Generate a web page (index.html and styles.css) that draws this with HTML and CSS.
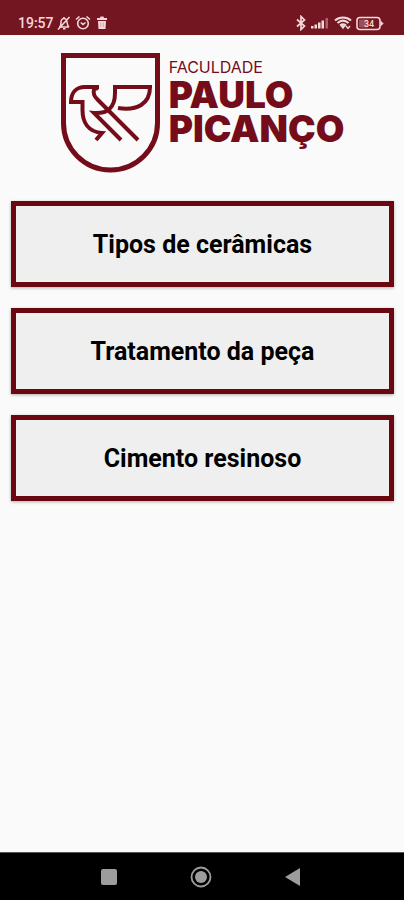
FILE: index.html
```
<!DOCTYPE html>
<html lang="pt-BR">

<head>
  <meta charset="utf-8">
  <meta name="viewport" content="width=device-width, initial-scale=1">
  <title>Faculdade Paulo Picanço</title>
  <link rel="stylesheet" href="styles.css">
</head>
<body>
  <header class="status-bar">
    <span class="time">19:57</span>
    <!-- silencioso, alarme, lixeira -->
    <svg class="mute" width="14" height="16" viewBox="0 0 14 16" fill="none" stroke="currentColor" stroke-width="1.5">
      <path d="M2 12H12M3 11.500C4.500 10 3.500 7 4.500 5C5.500 3 8.500 3 9.500 5C10.500 7 9.500 10 12 12M6 13.800H8.500M12.500 2L1 14.500M7 2V3.500"/>
    </svg>
    <svg class="alarm" width="16" height="16" viewBox="0 0 16 16" fill="none" stroke="currentColor" stroke-width="1.600">
      <circle cx="8" cy="8.500" r="5.300"/>
      <path d="M1 4.500L4.500 1.500M15 4.500L11.500 1.500M5.800 7.500L8 9.500L10.500 7.500"/>
    </svg>
    <svg class="trash" width="12" height="16" viewBox="0 0 12 16" fill="currentColor">
      <path d="M1 3H4L4.500 1.500H7.500L8 3H11V5H1ZM2 6H10L9.500 14H2.500Z"/>
      <path d="M4.700 7.500V12M7.300 7.500V12" stroke="#d98a90" stroke-width="0.700"/>
    </svg>
    <!-- bluetooth, sinal, wifi, bateria -->
    <svg class="bluetooth" width="12" height="16" viewBox="0 0 12 16" fill="none" stroke="currentColor" stroke-width="1.700">
      <path d="M2 4.500L9.500 11L6 14.500V1.500L9.500 5L2 11.500"/>
    </svg>
    <svg class="signal" width="18" height="16" viewBox="0 0 18 16" fill="currentColor">
      <path d="M0 11H2.500V13.500H0ZM3.500 9.500H6V13.500H3.500ZM7 7.500H9.500V13.500H7ZM10.500 5.500H13V13.500H10.500Z"/>
      <path d="M14.500 3H17V13.500H14.500Z" opacity="0.4"/>
    </svg>
    <svg class="wifi" width="18" height="16" viewBox="0 0 18 16" fill="none" stroke="currentColor" stroke-width="2">
      <path d="M1 5.500C5.500 1.500 12.500 1.500 17 5.500M3.500 8C7 5 11 5 14.500 8M6 10.500C8 9 10 9 12 10.500"/>
      <path d="M7.500 11L9 13L10.500 11ZM12 11L14 13.500L16 11" stroke-width="1.400"/>
    </svg>
    <svg class="battery" width="28" height="16" viewBox="0 0 28 16" fill="none" stroke="currentColor" stroke-width="1.600">
      <rect x="1" y="2.500" width="23" height="12" rx="3"/>
      <rect x="3" y="4.500" width="9" height="8" rx="1" fill="currentColor" stroke="none" opacity="0.3"/>
      <path d="M25 6.500L27 8.500L25 10.500Z" fill="currentColor" stroke-width="1"/>
      <text class="charge" x="13" y="12" text-anchor="middle">34</text>
    </svg>
  </header>

  <main>
    <h1 class="logo">
      <svg width="99" height="120" viewBox="0 0 99 120" fill="none" stroke="currentColor" stroke-width="5" aria-hidden="true">
        <path d="M2.500 2.500H96.500V70A47 47 0 0 1 2.500 70Z"/>
        <g stroke-width="4">
          <path d="M38 34H24C15 34 10 40 10 49H21.500V57C21.500 69 27 79 41 80L35 87"/>
          <path d="M37 35L33 36C32 41 33 43 37 47L77 87"/>
          <path d="M57 55C76 58 89 51 89 34H54V40C54 55 46 61 33 60L60 87"/>
        </g>
      </svg>
      <span class="logo-text">
        <span class="logo-small">FACULDADE</span>
        <span class="logo-name">PAULO<br>PICANÇO</span>
      </span>
    </h1>

    <div class="menu">
      <button type="button">Tipos de cerâmicas</button>
      <button type="button">Tratamento da peça</button>
      <button type="button">Cimento resinoso</button>
    </div>
  </main>

  <nav class="nav-bar">
    <button type="button" aria-label="Recentes">
      <svg width="22" height="22" viewBox="0 0 22 22" fill="currentColor"><rect x="3" y="3" width="16" height="16" rx="2"/></svg>
    </button>
    <button type="button" aria-label="Início">
      <svg width="22" height="22" viewBox="0 0 22 22" fill="currentColor">
        <circle cx="11" cy="11" r="6"/>
        <circle cx="11" cy="11" r="9.500" fill="none" stroke="currentColor" stroke-width="1.800"/>
      </svg>
    </button>
    <button type="button" aria-label="Voltar">
      <svg width="22" height="22" viewBox="0 0 22 22" fill="currentColor"><path d="M3 11L18 2V20Z"/></svg>
    </button>
  </nav>
</body>
</html>
```
FILE: styles.css
```
* {
  box-sizing: border-box;
}
body {
  margin: 0;
  min-height: 100vh;
  display: flex;
  flex-direction: column;
  background-color: #fafafa;
  font-family: Roboto, "Liberation Sans", sans-serif;
}
svg {
  display: block;
  flex: none;
}

/*ステータスバー*/
.status-bar {
  display: flex;
  align-items: center;
  height: 35px;
  padding: 10px 20px 0 18px;
  background-color: #731621;
  color: #f3d9da;
}
.time {
  font-size: 14px;
  font-weight: 500;
}
.mute {
  margin-left: 3px;
}
.alarm {
  margin-left: 4px;
}
.trash {
  margin-left: 5px;
}
.bluetooth {
  margin-left: auto;
}
.signal {
  margin-left: 4px;
}
.wifi {
  margin-left: 5px;
}
.battery {
  margin-left: 4px;
}
.charge {
  font-size: 9px;
  font-weight: 500;
  fill: currentColor;
  stroke: none;
}

main {
  flex: 1;
  padding: 18px 10px 0 11px;
}

/*ロゴ*/
.logo {
  display: flex;
  justify-content: center;
  gap: 9px;
  margin: 0 0 28px;
  color: #740c1a;
}
.logo-text {
  display: flex;
  flex-direction: column;
  padding-top: 4px;
  font-family: Inter, "Liberation Sans", sans-serif;
}
.logo-small {
  font-size: 16px;
  font-weight: 400;
  line-height: 21px;
}
.logo-name {
  font-size: 37px;
  font-weight: 900;
  line-height: 34px;
}

/*メニュー*/
.menu {
  display: flex;
  flex-direction: column;
  gap: 21px;
}
.menu button {
  height: 86px;
  border: 5px solid #6b0710;
  background-color: #efefef;
  box-shadow: 0 1px 3px rgba(0, 0, 0, 0.3);
  color: #000;
  font-family: inherit;
  font-size: 25px;
  font-weight: 700;
}

/*ナビゲーションバー*/
.nav-bar {
  display: flex;
  justify-content: center;
  gap: 70px;
  height: 48px;
  padding-right: 2px;
  border-top: 1px solid #555;
  background-color: #000;
}
.nav-bar button {
  padding: 0;
  border: 0;
  background: none;
  color: #9d9d9d;
}
```
